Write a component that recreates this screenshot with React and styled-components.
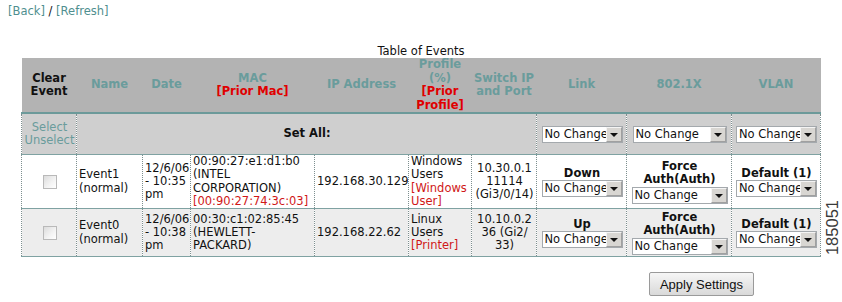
import React from "react";
import styled, { createGlobalStyle } from "styled-components";

const Global = createGlobalStyle`
  html, body { margin: 0; padding: 0; background: #ffffff; }
  body {
    font-family: "DejaVu Sans", Verdana, sans-serif;
    font-size: 11.5px;
    color: #111;
  }
`;

const Page = styled.div`
  padding: 4px 0 0 8px;
  width: 834px;
`;

const TopLinks = styled.div`
  line-height: 14px;
  height: 14px;
  margin-bottom: 26px;
  color: #111;
`;

const NavLink = styled.a`
  color: #4f8f8f;
  text-decoration: none;
`;

const Main = styled.div`
  display: flex;
  align-items: flex-end;
  margin-left: 13px;
`;

const Table = styled.table`
  border-collapse: collapse;
  table-layout: fixed;
  width: 799px;
`;

const Caption = styled.caption`
  caption-side: top;
  text-align: center;
  line-height: 14px;
  padding-bottom: 0;
  color: #111;
`;

const Th = styled.th`
  background: #b3b3b3;
  color: ${(p) => (p.$dark ? "#111" : "#6a9c9c")};
  font-weight: bold;
  height: 53px;
  padding: 0 2px;
  line-height: 13.5px;
  text-align: center;
  vertical-align: middle;
  border-bottom: 2px solid #6c9a9a;
`;

const Red = styled.span`
  color: ${(p) => (p.$soft ? "#d01818" : "#e00000")};
`;

const Row = styled.tr`
  background: ${(p) => p.$bg};
`;

const Td = styled.td`
  height: ${(p) => p.$h || "auto"};
  padding: 0 1px 0 2px;
  line-height: 13.3px;
  text-align: ${(p) => p.$align || "left"};
  vertical-align: middle;
  border-left: 1px dotted #7d8f8f;
  border-right: 1px dotted #7d8f8f;
  border-bottom: 1px solid #7fa2a2;
  ${(p) => (p.$open ? "border-left: none; border-right: none;" : "")}
  color: ${(p) => (p.$teal ? "#6a9c9c" : "#111")};
  font-weight: ${(p) => (p.$bold ? "bold" : "normal")};
  overflow: hidden;
  white-space: nowrap;
`;

const Stack = styled.div`
  display: flex;
  flex-direction: column;
  align-items: center;
  gap: ${(p) => p.$gap || "0px"};
`;

const Strong = styled.div`
  font-weight: bold;
  line-height: 13px;
`;

const Box = styled.input.attrs({ type: "checkbox" })`
  appearance: none;
  -webkit-appearance: none;
  width: 14px;
  height: 14px;
  border: 1px solid #b9b9b9;
  background: linear-gradient(135deg, #dcdcdc 0%, #f4f4f4 60%, #ffffff 100%);
  display: block;
  margin: 0 auto 0 19px;
`;

const SelectWrap = styled.span`
  position: relative;
  display: inline-block;
  width: ${(p) => p.$w}px;
  height: 17px;
  vertical-align: middle;
`;

const Select = styled.select`
  appearance: none;
  -webkit-appearance: none;
  width: 100%;
  height: 17px;
  margin: 0;
  padding: 0 16px 0 2px;
  border: 1px solid #a4a9ad;
  border-radius: 0;
  background: #ffffff;
  color: #111;
  font-family: "DejaVu Sans", Verdana, sans-serif;
  font-size: 11.5px;
  line-height: 15px;
`;

const Arrow = styled.span`
  position: absolute;
  right: 1px;
  top: 1px;
  width: 14px;
  height: 13px;
  background: #d8d6d2;
  border: 1px solid #f4f4f4;
  border-right-color: #a0a0a0;
  border-bottom-color: #a0a0a0;
  pointer-events: none;
  display: flex;
  align-items: center;
  justify-content: center;
  &::after {
    content: "";
    width: 0;
    height: 0;
    border-left: 4px solid transparent;
    border-right: 4px solid transparent;
    border-top: 4px solid #111;
    margin-top: 1px;
  }
`;

const FigureLabel = styled.div`
  writing-mode: vertical-rl;
  transform: rotate(180deg);
  font-family: "Liberation Sans", Arial, sans-serif;
  font-size: 16.5px;
  line-height: 12px;
  color: #3a3a3a;
  margin-left: 5px;
  margin-bottom: 2px;
`;

const ButtonRow = styled.div`
  display: flex;
  margin: 15px 0 0 641px;
`;

const Button = styled.button`
  width: 105px;
  height: 24px;
  font-family: "Liberation Sans", Arial, sans-serif;
  font-size: 13px;
  color: #111;
  background: linear-gradient(#f6f6f6, #d9d9d9);
  border: 1px solid #9a9a9a;
  border-radius: 2px;
  padding: 0;
`;

function Dropdown({ w = 80 }) {
  return (
    <SelectWrap $w={w}>
      <Select defaultValue="nc">
        <option value="nc">No Change</option>
      </Select>
      <Arrow />
    </SelectWrap>
  );
}

const events = [
  {
    bg: "#ffffff",
    h: "53px",
    name: ["Event1", "(normal)"],
    date: ["12/6/06", "- 10:35", "pm"],
    mac: ["00:90:27:e1:d1:b0", "(INTEL", "CORPORATION)"],
    prior: "[00:90:27:74:3c:03]",
    ip: "192.168.30.129",
    profile: ["Windows", "Users"],
    priorProfile: ["[Windows", "User]"],
    sw: ["10.30.0.1", "11114", "(Gi3/0/14)"],
    link: "Down",
  },
  {
    bg: "#ededed",
    h: "47px",
    name: ["Event0", "(normal)"],
    date: ["12/6/06", "- 10:38", "pm"],
    mac: ["00:30:c1:02:85:45", "(HEWLETT-", "PACKARD)"],
    prior: null,
    ip: "192.168.22.62",
    profile: ["Linux", "Users"],
    priorProfile: ["[Printer]"],
    sw: ["10.10.0.2", "36 (Gi2/", "33)"],
    link: "Up",
  },
];

const Lines = ({ items }) =>
  items.map((t, i) => (
    <React.Fragment key={i}>
      {i > 0 && <br />}
      {t}
    </React.Fragment>
  ));

export default function App() {
  const widths = [55, 66, 48, 124, 94, 63, 65, 90, 105, 89];
  return (
    <Page>
      <Global />
      <TopLinks>
        <NavLink href="#">[Back]</NavLink> / <NavLink href="#">[Refresh]</NavLink>
      </TopLinks>
      <Main>
        <Table>
          <Caption>Table of Events</Caption>
          <colgroup>
            {widths.map((w, i) => (
              <col key={i} style={{ width: w }} />
            ))}
          </colgroup>
          <thead>
            <tr>
              <Th $dark>
                Clear
                <br />
                Event
              </Th>
              <Th>Name</Th>
              <Th>Date</Th>
              <Th>
                MAC
                <br />
                <Red>[Prior Mac]</Red>
              </Th>
              <Th>IP Address</Th>
              <Th>
                Profile
                <br />
                (%)
                <br />
                <Red>
                  [Prior
                  <br />
                  Profile]
                </Red>
              </Th>
              <Th>
                Switch IP
                <br />
                and Port
              </Th>
              <Th>Link</Th>
              <Th>802.1X</Th>
              <Th>VLAN</Th>
            </tr>
          </thead>
          <tbody>
            <Row $bg="#cfcfcf">
              <Td $h="40px" $align="center" $teal>
                Select
                <br />
                Unselect
              </Td>
              <Td colSpan={6} $align="center" $bold $open>
                Set All:
              </Td>
              <Td $align="center">
                <Dropdown w={81} />
              </Td>
              <Td $align="center">
                <Dropdown w={94} />
              </Td>
              <Td $align="center">
                <Dropdown w={81} />
              </Td>
            </Row>
            {events.map((e) => (
              <Row key={e.name[0]} $bg={e.bg}>
                <Td $h={e.h} $align="center">
                  <Box />
                </Td>
                <Td>
                  <Lines items={e.name} />
                </Td>
                <Td>
                  <Lines items={e.date} />
                </Td>
                <Td>
                  <Lines items={e.mac} />
                  {e.prior && (
                    <>
                      <br />
                      <Red $soft>{e.prior}</Red>
                    </>
                  )}
                </Td>
                <Td>{e.ip}</Td>
                <Td>
                  <Lines items={e.profile} />
                  <br />
                  <Red $soft>
                    <Lines items={e.priorProfile} />
                  </Red>
                </Td>
                <Td $align="center">
                  <Lines items={e.sw} />
                </Td>
                <Td $align="center">
                  <Stack>
                    <Strong>{e.link}</Strong>
                    <Dropdown w={81} />
                  </Stack>
                </Td>
                <Td $align="center">
                  <Stack $gap="1px">
                    <Strong>
                      Force
                      <br />
                      Auth(Auth)
                    </Strong>
                    <Dropdown w={96} />
                  </Stack>
                </Td>
                <Td $align="center">
                  <Stack>
                    <Strong>Default (1)</Strong>
                    <Dropdown w={81} />
                  </Stack>
                </Td>
              </Row>
            ))}
          </tbody>
        </Table>
        <FigureLabel>185051</FigureLabel>
      </Main>
      <ButtonRow>
        <Button type="button">Apply Settings</Button>
      </ButtonRow>
    </Page>
  );
}
